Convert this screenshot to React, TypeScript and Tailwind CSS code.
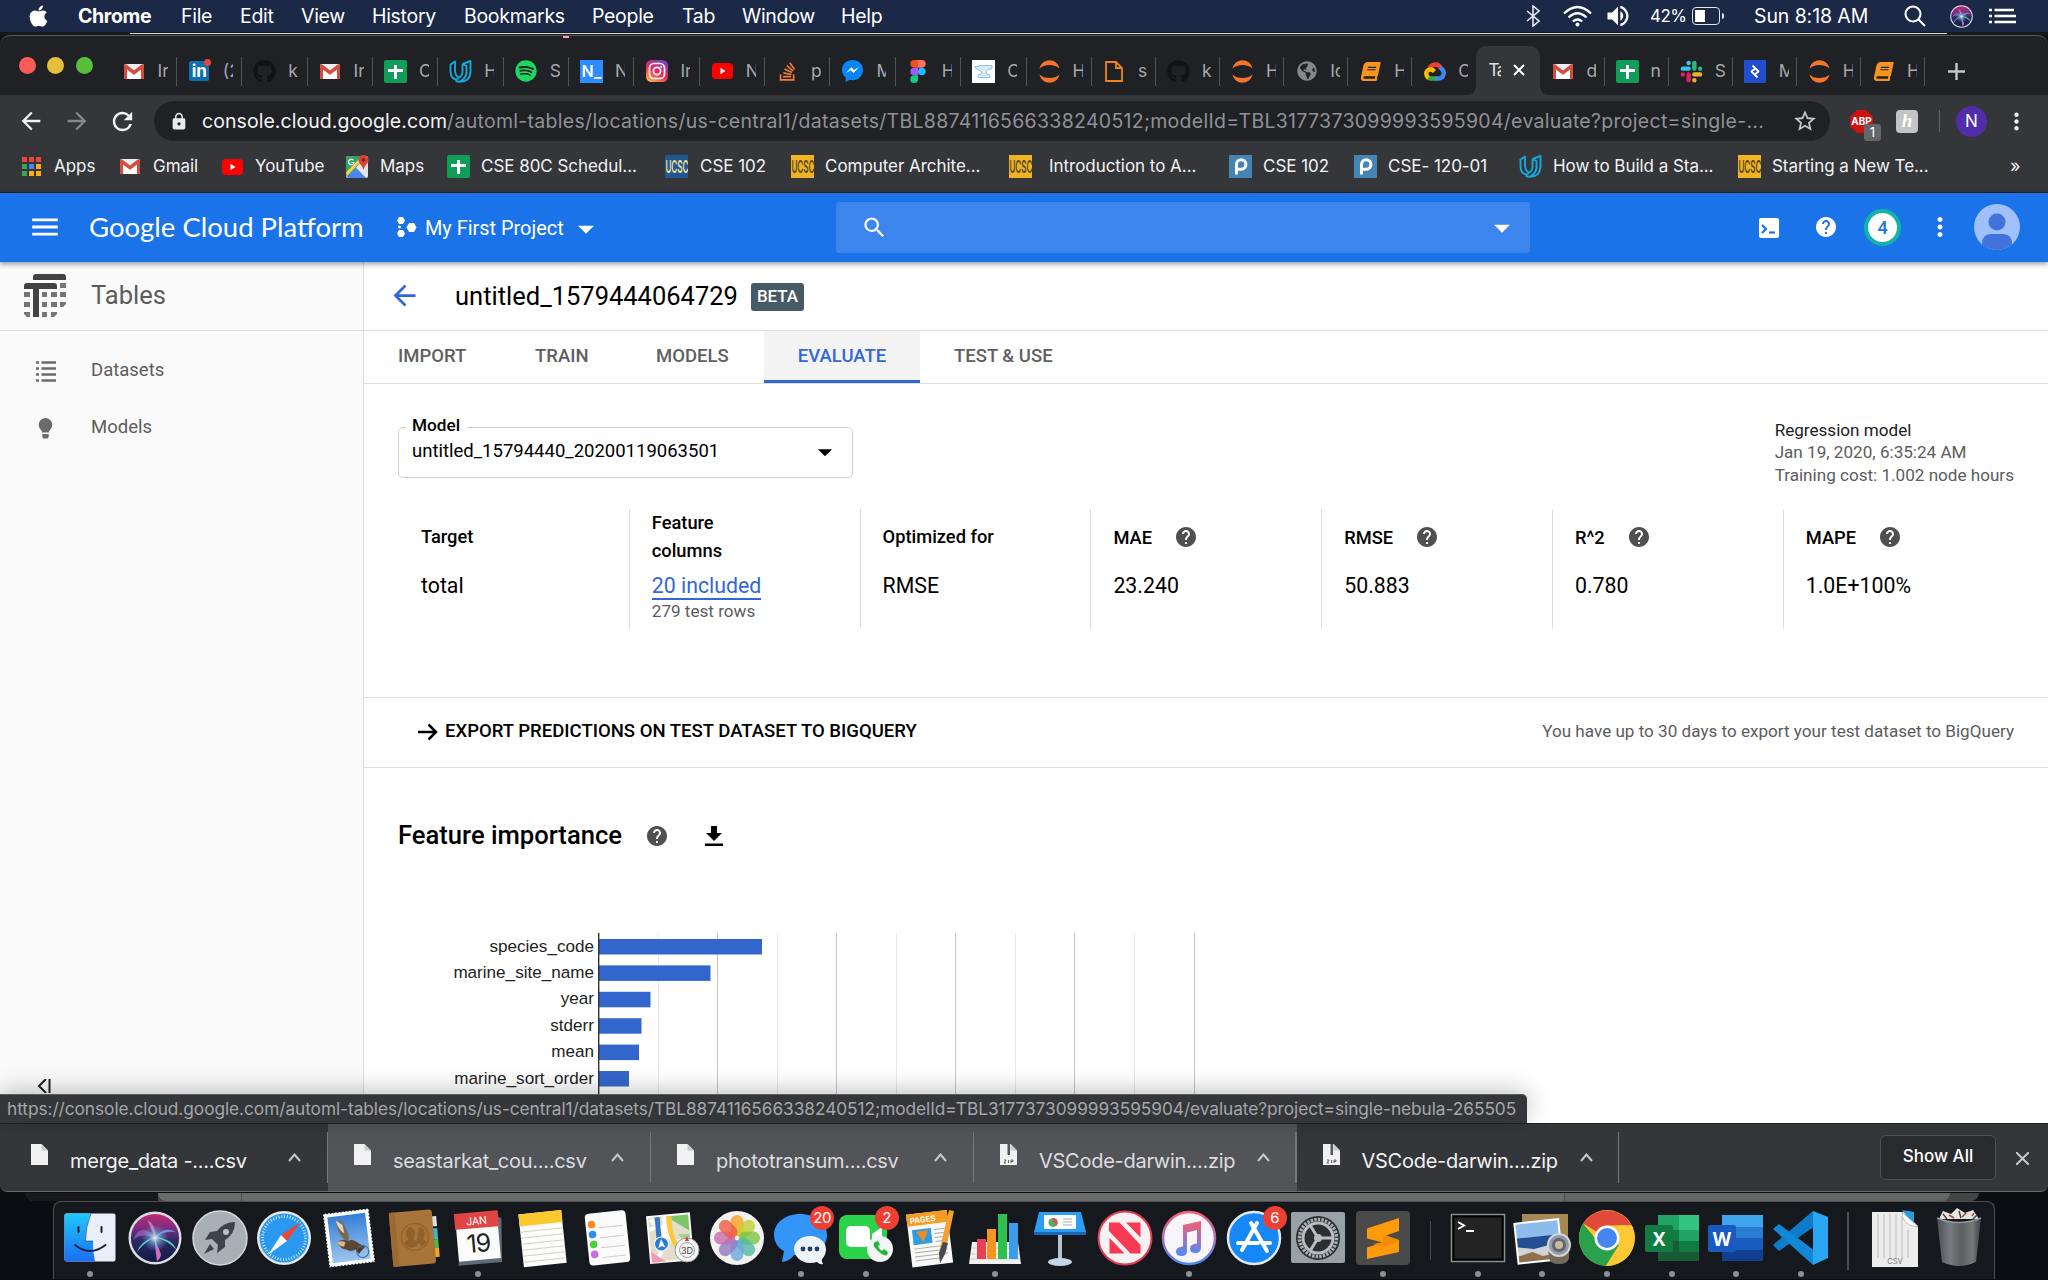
import React from 'react';
import {
  FaApple, FaGithub, FaSpotify, FaStackOverflow, FaGlobeAmericas, FaBook,
} from 'react-icons/fa';
import {
  MdArrowBack, MdArrowForward, MdRefresh, MdLock, MdStarBorder, MdHelp, MdMenu, MdMoreVert, MdArrowDropDown,
  MdSearch, MdVolumeUp,
} from 'react-icons/md';

type Kids = { children?: React.ReactNode };

/* ---------- small brand icons ---------- */

const Gmail = () => (
  <svg className="h-[15px] w-[20px]" viewBox="0 0 20 15">
    <rect width="20" height="15" rx="1.500" fill="#eceff1" />
    <path d="M3 15V6l7 5.500L17 6v9z" fill="#fff" />
    <path d="M0 1.500V13.500Q0 15 1.500 15H3V5.500L10 10.800L17 5.500V15H18.500Q20 15 20 13.500V1.500Q19.500 0 18 0.200L10 6.500L2 0.200Q.5 0 0 1.500z" fill="#d54b3d" />
  </svg>
);
const Sheets = () => (
  <svg className="h-[23px] w-[23px]" viewBox="0 0 23 23">
    <rect width="23" height="23" rx="2" fill="#0f9d58" />
    <path d="M10 5h3v4h6v3h-6v7h-3v-7H4V9h6z" fill="#fff" />
  </svg>
);
const LinkedIn = () => (
  <span className="relative flex h-[20px] w-[20px] items-center justify-center rounded-[2px] bg-[#0a70b0] text-[17px] leading-none font-bold text-white">
    in
    <span className="absolute -top-[2px] -right-[2px] h-[7px] w-[7px] rounded-full bg-[#e8453c]" />
  </span>
);
const Udacity = () => (
  <svg className="h-[23px] w-[23px]" viewBox="0 0 23 23" fill="none" stroke="#15a9db" strokeWidth="1.900" strokeLinejoin="round">
    <path d="M1.500 4.500L6 1.500V11Q6.500 16 10 17.500Q7 21.500 3 17Q1.500 15 1.500 11z" />
    <path d="M13.500 4L21.500 1V12Q21 21.500 11 21.800Q8 21.800 6.500 20.500M13.500 4V12Q13 16.500 10 17.500M13.500 4L17.500 6V13Q16.500 19 11 21.500" />
  </svg>
);
const Insta = () => (
  <svg className="h-[22px] w-[22px]" viewBox="0 0 22 22">
    <defs>
      <linearGradient id="ig" x1="0.200" y1="1" x2="0.800" y2="0">
        <stop offset="0" stopColor="#fdb34b" />
        <stop offset=".45" stopColor="#ee2a58" />
        <stop offset="1" stopColor="#7a3dd0" />
      </linearGradient>
    </defs>
    <rect width="22" height="22" rx="5.500" fill="url(#ig)" />
    <rect x="3.500" y="3.500" width="15" height="15" rx="4.500" fill="none" stroke="#fff" strokeWidth="1.700" />
    <circle cx="11" cy="11" r="3.600" fill="none" stroke="#fff" strokeWidth="1.700" />
    <circle cx="15.300" cy="6.700" r="1" fill="#fff" />
  </svg>
);
const YouTube = () => (
  <svg className="h-[16px] w-[21px]" viewBox="0 0 21 16">
    <rect width="21" height="16" rx="3.500" fill="#f00" />
    <path d="M8.500 4.800l5 3.200-5 3.200z" fill="#fff" />
  </svg>
);
const Messenger = () => (
  <svg className="h-[22px] w-[21px]" viewBox="0 0 21 22">
    <path d="M10.500 0C4.500 0 0 4.300 0 10c0 3.200 1.500 5.700 3.700 7.400V22l3.800-2.200c1 .2 2 .4 3 .4 6 0 10.500-4.400 10.500-10.200S16.500 0 10.500 0z" fill="#0a86fa" />
    <path d="M4 13l5.300-5.700 2.700 2.800 4.800-2.800-5.200 5.700-2.800-2.800z" fill="#fff" />
  </svg>
);
const Figma = () => (
  <svg className="h-[23px] w-[16px]" viewBox="0 0 16 24">
    <path d="M4 0h4v8H4a4 4 0 010-8z" fill="#f24e1e" />
    <path d="M8 0h4a4 4 0 010 8H8z" fill="#ff7262" />
    <path d="M4 8h4v8H4a4 4 0 010-8z" fill="#a259ff" />
    <circle cx="12" cy="12" r="4" fill="#1abcfe" />
    <path d="M4 16h4v4a4 4 0 11-4-4z" fill="#0acf83" />
  </svg>
);
const Anvil = () => (
  <svg className="h-[23px] w-[23px]" viewBox="0 0 23 23">
    <rect width="23" height="23" fill="#fff" />
    <path d="M7 5.500h13v3q-5 .5-6 3.500 0 2.500 4 3v2.500H6V15q4-.5 4-3Q8.500 11.500 7 10 4 9.500 2.500 6.500H7z" fill="#d8ebfb" stroke="#8fbfe8" />
  </svg>
);
const Jupyter = () => (
  <svg className="h-[23px] w-[21px]" viewBox="0 0 21 23" fill="#f3752b">
    <path d="M0.500 8.500C3-2.500 18-2.500 20.500 8.500 16 3.800 5 3.800.5 8.500zM.5 14.500c4.500 4.700 15.500 4.700 20 0-2.500 11-17.500 11-20 0z" />
  </svg>
);
const DocIcon = () => (
  <svg className="h-[21px] w-[18px]" viewBox="0 0 18 21" fill="none" stroke="#f0831c" strokeWidth="1.800">
    <path d="M1 1h10l6 6v13H1zM11 1v6h6" />
  </svg>
);
const GCloud = () => (
  <svg className="h-[19px] w-[22px]" viewBox="0 0 22 19" fill="none" strokeWidth="4.400">
    <path d="M5.500 6Q8 2.200 12 2.500q3.500.5 5 4" stroke="#ea4335" />
    <path d="M16 5.500q4 2.500 3.700 6Q19 16.200 15 16.500H11" stroke="#4285f4" />
    <path d="M12 16.500H6.500q-1.500 0-2.500-1" stroke="#34a853" />
    <path d="M4.500 16q-3-2.500-2-6Q4 7 7 7.500q2 .5 3.500 2" stroke="#fbbc05" />
  </svg>
);
const Slack = () => (
  <svg className="h-[23px] w-[23px]" viewBox="0 0 24 24" strokeWidth="4.600" strokeLinecap="round">
    <path d="M9 3v.1M3 9h6" stroke="#36c5f0" /><path d="M15 3v6M21 9v.1" stroke="#2eb67d" />
    <path d="M15 15h6M15 21v.1" stroke="#ecb22e" /><path d="M9 15v6M3 15v.1" stroke="#e01e5a" />
  </svg>
);
const Toptal = () => (
  <svg className="h-[23px] w-[22px]" viewBox="0 0 22 23">
    <rect width="22" height="23" fill="#204ecf" />
    <path d="M8.500 5.500L15 12M7 11L13.500 17.500M14.500 11.500L10.500 14.800M7.500 11.300L11.500 8.500" fill="none" stroke="#fff" strokeWidth="1.800" />
  </svg>
);
const MapsIcon = () => (
  <svg className="h-[24px] w-[24px]" viewBox="0 0 24 24">
    <rect x="1" y="1" width="22" height="22" rx="2" fill="#e8eaed" />
    <path d="M1 3q0-2 2-2h18L3 22q-2-.5-2-2z" fill="#34a366" />
    <path d="M2 22L11 12.500l10 10.500H4z" fill="#4a86ee" />
    <path d="M1 17.500L17 1h4L2 21z" fill="#fdd24a" />
    <path d="M13 11l10 10V9z" fill="#dfe3e8" />
    <path d="M18.500 0a5 5 0 00-5 5c0 4 4 5 5 10 1-5 5-6 5-10a5 5 0 00-5-5z" fill="#dc4437" />
    <circle cx="18.500" cy="5" r="1.800" fill="#7b231c" />
    <path d="M8.300 5.200A2.700 2.700 0 109 7.500H6.500" fill="none" stroke="#fff" strokeWidth="1.200" />
  </svg>
);
const Ucsc = ({ blue }: { blue?: boolean }) => (
  <span className={`flex h-[23px] w-[23px] items-center justify-center overflow-hidden ${blue ? 'bg-[#1f5891] text-[#f3dd92]' : 'bg-[#efb323] text-[#5b4a1c]'}`}>
    <span className="scale-x-[0.580] scale-y-[1.250] text-[14px] leading-none font-semibold">UCSC</span>
  </span>
);
const PIcon = () => (
  <svg className="h-[23px] w-[23px]" viewBox="0 0 23 23">
    <rect width="23" height="23" fill="#4585b5" />
    <path d="M7.500 19.500V9.500a4.700 4.700 0 114.700 4.700H7.500" fill="none" stroke="#fff" strokeWidth="3" />
  </svg>
);
const AppsIcon = () => (
  <span className="grid w-[19px] grid-cols-3 gap-[2px]">
    {['bg-[#e8453c]', 'bg-[#e8453c]', 'bg-[#e8453c]', 'bg-[#34a853]', 'bg-[#4285f4]', 'bg-[#fbae17]', 'bg-[#34a853]', 'bg-[#fbae17]', 'bg-[#fbae17]'].map((c, i) => (
      <span key={i} className={`h-[5px] w-[5px] ${c}`} />
    ))}
  </span>
);
const Book = () => <FaBook className="h-[19px] w-[19px] -skew-x-12 text-[#f7941e]" />;
const Git = () => <FaGithub className="h-[23px] w-[23px] text-[#111214]" />;

/* ---------- menu bar ---------- */

const menus: [string, string][] = [
  ['File', 'w-[59px]'], ['Edit', 'w-[61px]'], ['View', 'w-[71px]'], ['History', 'w-[92px]'], ['Bookmarks', 'w-[128px]'],
  ['People', 'w-[90px]'], ['Tab', 'w-[60px]'], ['Window', 'w-[99px]'], ['Help', 'w-[50px]'],
];

const SiriGlyph = ({ className }: { className: string }) => (
  <svg className={className} viewBox="0 0 56 56">
    <defs>
      <linearGradient id="siriBack" x1="0" y1="0" x2="0" y2="1">
        <stop offset="0" stopColor="#c12a72" /><stop offset=".3" stopColor="#7a2c80" /><stop offset=".55" stopColor="#2d2a63" /><stop offset="1" stopColor="#101a44" />
      </linearGradient>
      <radialGradient id="siriGlow" cx=".5" cy=".5" r=".5">
        <stop offset="0" stopColor="#fff" stopOpacity=".95" /><stop offset=".4" stopColor="#8fdcf5" stopOpacity=".5" /><stop offset="1" stopColor="#5fb3ff" stopOpacity="0" />
      </radialGradient>
    </defs>
    <circle cx="28" cy="28" r="27.500" fill="#dcdde4" />
    <circle cx="28" cy="28" r="25" fill="url(#siriBack)" />
    <path d="M5 30Q14 10 28 28 15 22 5 30z" fill="#b57fe0" opacity=".5" />
    <path d="M50 22Q38 14 28 28q10-8 22-6z" fill="#7ac9ff" opacity=".6" />
    <path d="M28 27Q12 32 9 43q7-10 19-16z" fill="#5de8e0" opacity=".9" />
    <path d="M28 27q18 2 22 13-8-9-22-13z" fill="#5de8c8" opacity=".9" />
    <path d="M27 27l3 25q5-4 4-8z" fill="#f07ad0" opacity=".85" />
    <path d="M28 28L20 9q10 6 8 19z" fill="#f3a7dc" opacity=".6" />
    <circle cx="28" cy="28" r="14" fill="url(#siriGlow)" />
  </svg>
);

const MenuBar = () => (
  <div className="flex h-[32px] items-center bg-[#1b2846] pt-[1px] pr-[32px] pl-[29px] text-[19.500px] tracking-[-0.300px] text-white">
    <FaApple className="mr-[30px] h-[24px] w-[19px] shrink-0" />
    <span className="w-[103px] font-bold tracking-[-0.350px]">Chrome</span>
    {menus.map(([t, w]) => <span key={t} className={`${w} whitespace-nowrap`}>{t}</span>)}
    <div className="ml-auto flex items-center">
      <svg className="mr-[23px] h-[22px] w-[14px]" viewBox="0 0 14 22" fill="none" stroke="#e8ebf2" strokeWidth="1.600"><path d="M1 6l12 10-6 5V1l6 5L1 16" /></svg>
      <svg className="mr-[12px] h-[22px] w-[29px]" viewBox="0 0 29 22" fill="none" stroke="#fff" strokeWidth="2.200"><path d="M1 8.500Q14.500-4.500 28 8.500M5.500 12.500q9-8.500 18 0M9.800 16.500q4.700-4 9.400 0" /><circle cx="14.500" cy="19.500" r="2" fill="#fff" stroke="none" /></svg>
      <MdVolumeUp className="mr-[18px] h-[28px] w-[28px]" />
      <span className="w-[42px] text-[17px] tracking-[-0.600px]">42%</span>
      <span className="mr-[2px] flex h-[18px] w-[28px] rounded-[4px] border-[1.500px] border-[#e0e3ea] p-[2px]"><span className="w-[10px] bg-white" /></span>
      <span className="mr-[30px] h-[6px] w-[2px] rounded-r bg-[#e0e3ea]" />
      <span className="w-[150px] tracking-[-0.100px] whitespace-nowrap">Sun 8:18 AM</span>
      <svg className="mr-[24px] h-[22px] w-[22px]" viewBox="0 0 22 22" fill="none" stroke="#fff" strokeWidth="2"><circle cx="9" cy="9" r="7.500" /><path d="M14.500 14.500L21 21" /></svg>
      <SiriGlyph className="mr-[16px] h-[23px] w-[23px]" />
      <svg className="h-[16px] w-[27px]" viewBox="0 0 27 16" stroke="#fff" strokeWidth="2.600"><path d="M0 2h3M5.500 2H25M0 8h3M5.500 8H27M0 14h3M5.500 14H27" /></svg>
    </div>
  </div>
);

/* ---------- browser tabs ---------- */

const Globe = () => <FaGlobeAmericas className="h-[20px] w-[20px] text-[#85878b]" />;
const tabsA: [React.FC, string][] = [
  [Gmail, 'In'], [LinkedIn, '(2'], [Git, 'k'], [Gmail, 'In'], [Sheets, 'C'], [Udacity, 'H'],
  [() => <FaSpotify className="h-[22px] w-[22px] text-[#1ed760]" />, 'S'],
  [() => <span className="flex h-[23px] w-[23px] items-center justify-center bg-[#2d8cff] text-[16px] font-semibold text-white">N_</span>, 'N'],
  [Insta, 'In'], [YouTube, 'N'],
  [() => <FaStackOverflow className="h-[21px] w-[19px] text-[#ef8236]" />, 'p'],
  [Messenger, 'M'], [Figma, 'H'], [Anvil, 'C'], [Jupyter, 'H'],
];
const tabsB: [React.FC, string][] = [[DocIcon, 's'], [Git, 'k'], [Jupyter, 'H'], [Globe, 'Ic'], [Book, 'H'], [GCloud, 'C']];
const tabsC: [React.FC, string][] = [[Gmail, 'd'], [Sheets, 'n'], [Slack, 'S'], [Toptal, 'M'], [Jupyter, 'H'], [Book, 'H']];

const Tab = ({ icon: Icon, text, width, line = true }: { icon: React.FC; text: string; width: string; line?: boolean }) => (
  <div className={`flex h-[29px] shrink-0 items-center ${width} ${line ? 'border-r-[1.500px] border-[#505256]' : ''}`}>
    <span className="ml-[10px] flex w-[25px] justify-center"><Icon /></span>
    <span className="ml-[11px] w-[10px] overflow-hidden text-[17.500px] whitespace-nowrap text-[#a6a9ae]">{text}</span>
  </div>
);

const TabStrip = () => (
  <div className="flex h-[60px] items-start rounded-t-[10px] border-t border-[#57595d] bg-[#202124] pl-[18.500px]">
    <div className="mt-[21px] mr-[19px] flex w-[74px] gap-[11.500px]">
      <span className="h-[17px] w-[17px] rounded-full bg-[#fc5b57]" />
      <span className="h-[17px] w-[17px] rounded-full bg-[#e5bf3c]" />
      <span className="h-[17px] w-[17px] rounded-full bg-[#57c038]" />
    </div>
    <div className="mt-[21px] flex items-center">
      {tabsA.map(([I, t], i) => <Tab key={i} icon={I} text={t} width="w-[65.370px]" />)}
      {tabsB.map(([I, t], i) => <Tab key={i} icon={I} text={t} width="w-[64.100px]" line={i < 5} />)}
    </div>
    <div className="relative mt-[10px] flex h-[49px] w-[64px] items-center rounded-t-[11px] bg-[#35363a] pl-[12px]">
      <svg className="absolute bottom-0 -left-[10px] h-[10px] w-[84px]" viewBox="0 0 84 10" fill="#35363a"><path d="M0 10Q10 10 10 0v10zM74 0q0 10 10 10H74z" /></svg>
      <span className="w-[13px] overflow-hidden text-[17px] tracking-[-1.500px] text-[#e0e1e3]">Ta</span>
      <svg className="ml-[12px] h-[12px] w-[12px]" viewBox="0 0 12 12" stroke="#fff" strokeWidth="2"><path d="M1 1l10 10M11 1L1 11" /></svg>
    </div>
    <div className="mt-[21px] flex items-center">
      {tabsC.map(([I, t], i) => <Tab key={i} icon={I} text={t} width="w-[64.100px]" />)}
      <svg className="ml-[23px] h-[17px] w-[17px]" viewBox="0 0 17 17" stroke="#c6c8cc" strokeWidth="2.400"><path d="M8.500 0v17M0 8.500h17" /></svg>
    </div>
  </div>
);

const Toolbar = () => (
  <div className="flex h-[51px] items-center bg-[#35363a] pt-[2px] pl-[17px]">
    <MdArrowBack className="h-[28px] w-[28px] text-[#f1f3f4]" />
    <MdArrowForward className="ml-[18px] h-[28px] w-[28px] text-[#85878b]" />
    <MdRefresh className="ml-[17px] h-[29px] w-[29px] text-[#f1f3f4]" />
    <div className="ml-[17px] flex h-[40px] w-[1676px] items-center rounded-full bg-[#202124] pr-[12px] pl-[15px]">
      <MdLock className="h-[19px] w-[20px] text-[#e8eaed]" />
      <span className="ml-[13px] text-[19.500px] tracking-[0.295px] whitespace-nowrap text-[#8f9297]">
        <span className="tracking-[0.060px] text-[#f1f3f4]">console.cloud.google.com</span>/automl-tables/locations/us-central1/datasets/TBL8874116566338240512;modelId=TBL3177373099993595904/evaluate?project=single-...
      </span>
      <MdStarBorder className="ml-auto h-[26px] w-[26px] text-[#c6c8cc]" />
    </div>
    <div className="relative ml-[20px] h-[23px] w-[23px]">
      <svg className="h-[23px] w-[23px]" viewBox="0 0 23 23"><path d="M7 0h9l7 7v9l-7 7H7l-7-7V7z" fill="#d2110f" /></svg>
      <span className="absolute inset-0 flex items-center justify-center text-[10px] font-bold text-white">ABP</span>
      <span className="absolute top-[14px] left-[14px] flex h-[17px] w-[17px] items-center justify-center rounded-[3px] bg-[#646669] text-[13px] text-white">1</span>
    </div>
    <span className="ml-[23px] flex h-[23px] w-[22px] items-center justify-center rounded-[4px] bg-[#c3c4c6] font-['Liberation_Serif'] text-[19px] font-bold text-white italic">h</span>
    <span className="ml-[21px] h-[22px] w-px bg-[#5f6368]" />
    <span className="ml-[16px] flex h-[31px] w-[31px] items-center justify-center rounded-full bg-[#512da8] text-[17px] text-white">N</span>
    <MdMoreVert className="ml-[16px] h-[27px] w-[27px] text-[#f1f3f4]" />
  </div>
);

const bookmarks: [React.ReactNode, string, string, string][] = [
  [<AppsIcon />, 'Apps', 'w-[32px]', 'w-[66px]'],
  [<Gmail />, 'Gmail', 'w-[33px]', 'w-[69px]'],
  [<YouTube />, 'YouTube', 'w-[33px]', 'w-[90px]'],
  [<MapsIcon />, 'Maps', 'w-[35px]', 'w-[67px]'],
  [<Sheets />, 'CSE 80C Schedul...', 'w-[34px]', 'w-[184px]'],
  [<Ucsc blue />, 'CSE 102', 'w-[35px]', 'w-[91px]'],
  [<Ucsc />, 'Computer Archite...', 'w-[34px]', 'w-[184px]'],
  [<Ucsc />, 'Introduction to A...', 'w-[40px]', 'w-[180px]'],
  [<PIcon />, 'CSE 102', 'w-[34px]', 'w-[91px]'],
  [<PIcon />, 'CSE- 120-01', 'w-[34px]', 'w-[131px]'],
  [<Udacity />, 'How to Build a Sta...', 'w-[34px]', 'w-[185px]'],
  [<Ucsc />, 'Starting a New Te...', 'w-[34px]', 'w-[238px]'],
];
const Bookmarks = () => (
  <div className="flex h-[47px] items-center border-b border-[#202124] bg-[#35363a] pb-[4px] pl-[22px] text-[17px] tracking-[-0.040px] text-[#f1f3f4]">
    {bookmarks.map(([icon, t, a, b], i) => (
      <div key={i} className="flex shrink-0 items-center">
        <span className={a}>{icon}</span>
        <span className={`${b} whitespace-nowrap`}>{t}</span>
      </div>
    ))}
    <span className="pb-[2px] text-[18px] leading-none">»</span>
  </div>
);

/* ---------- cloud console ---------- */

const GcpHeader = () => (
  <div className="relative z-10 flex h-[69px] shrink-0 items-center bg-[#1a73e8] pl-[28px] font-['Roboto'] text-white shadow-[0_2px_5px_rgba(0,0,0,0.400)]">
    <MdMenu className="h-[34px] w-[34px]" />
    <span className="ml-[27px] w-[306px] font-['Lato'] text-[27.500px] whitespace-nowrap">Google Cloud Platform</span>
    <svg className="mr-[8px] h-[21px] w-[22px]" viewBox="0 0 22 21" fill="#fff"><path d="M4 0h4l2 3.500L8 7H4L2 3.500zM4 13h4l2 3.500L8 20H4L2 16.500zM14 6h5l2.500 4.500L19 15h-5l-2.500-4.500z" /><circle cx="4.500" cy="10" r="1.500" /></svg>
    <span className="w-[142px] pt-[3px] text-[19.900px] whitespace-nowrap">My First Project</span>
    <MdArrowDropDown className="mt-[3px] h-[38px] w-[38px]" />
    <div className="mr-[229px] ml-auto flex h-[51px] w-[694px] items-center justify-between rounded-[3px] bg-[#3b85ec] pr-[9px] pl-[25px]">
      <MdSearch className="h-[27px] w-[27px]" />
      <MdArrowDropDown className="mt-[2px] h-[38px] w-[38px]" />
    </div>
    <svg className="mt-[2px] h-[20px] w-[20px]" viewBox="0 0 20 20"><rect width="20" height="20" rx="2" fill="#fff" /><path d="M3 7l4 4-4 4" fill="none" stroke="#1a73e8" strokeWidth="2.200" /><path d="M10 14.500h6" stroke="#1a73e8" strokeWidth="2.200" /></svg>
    <MdHelp className="ml-[35px] h-[24px] w-[24px]" />
    <span className="ml-[26px] flex h-[37px] w-[37px] items-center justify-center rounded-full border-[4px] border-[#12b5a5] bg-white text-[18px] font-medium text-[#1a73e8]">4</span>
    <MdMoreVert className="ml-[24px] h-[30px] w-[30px]" />
    <svg className="mr-[28px] ml-[19px] h-[46px] w-[46px]" viewBox="0 0 46 46">
      <clipPath id="av"><circle cx="23" cy="23" r="23" /></clipPath>
      <circle cx="23" cy="23" r="23" fill="#9fc0f8" />
      <g clipPath="url(#av)" fill="#4272dc"><circle cx="23" cy="18" r="8.500" /><path d="M8 46V40q0-10 9-10h12q9 0 9 10v6z" /></g>
    </svg>
  </div>
);

const TablesIcon = () => (
  <svg className="h-[43px] w-[42px]" viewBox="0 0 42 43" fill="#434343">
    <path d="M9 6V3Q9 0 12 0h27q3 0 3 3v3zM0 15v-3q0-3 3-3h27q3 0 3 3v3zM9 15h6v28H9z" />
    <path d="M36 9h6v5h-6zM0 18h6v5H0zM18 18h5v5h-5zM27 18h6v5h-6zM36 18h6v5h-6zM0 28h6v5H0zM18 28h5v5h-5zM27 28h6v5h-6zM36 28h6v2l-3 3h-3zM0 38h6v5H3l-3-3zM18 38h5v5h-5zM27 38h6v2l-3 3h-3z" fill="#757575" />
  </svg>
);

const Sidebar = () => (
  <div className="flex w-[364px] shrink-0 flex-col border-r border-[#dcdcdc] bg-[#fafafa] text-[#5c5c5c]">
    <div className="flex h-[69px] items-center border-b border-[#dcdcdc] pl-[24px]">
      <TablesIcon />
      <span className="ml-[25px] text-[25.500px]">Tables</span>
    </div>
    <div className="mt-[12px] flex h-[57px] items-center pl-[36px]">
      <svg className="h-[21px] w-[20px]" viewBox="0 0 20 21" stroke="#6b6b6b" strokeWidth="2.600"><path d="M0 1.500h3M5.500 1.500H20M0 7.500h3M5.500 7.500H20M0 13.500h3M5.500 13.500H20M0 19.500h3M5.500 19.500H20" /></svg>
      <span className="ml-[35px] text-[18.500px]">Datasets</span>
    </div>
    <div className="flex h-[57px] items-center pl-[38px]">
      <svg className="h-[21px] w-[15px]" viewBox="0 0 15 21" fill="#6b6b6b"><path d="M7.500 0a6.800 6.800 0 00-6.800 6.800c0 3 2 5 3.300 6.700v1h7v-1c1.300-1.700 3.300-3.700 3.300-6.700A6.800 6.800 0 007.500 0zM4.300 16h6.400v3l-1 1.500H5.300l-1-1.500z" /></svg>
      <span className="ml-[38px] text-[18.500px]">Models</span>
    </div>
    <svg className="mt-auto mb-[30px] ml-[37px] h-[14px] w-[14px]" viewBox="0 0 14 14" fill="none" stroke="#222" strokeWidth="2"><path d="M9 0L2 7l7 7M12.500 0v14" /></svg>
  </div>
);

const Help = ({ className }: { className: string }) => <MdHelp className={`h-[24px] w-[24px] text-[#505050] ${className}`} />;

const Metric = ({ label, help, value, children }: { label: string; help?: boolean; value?: string } & Kids) => (
  <div className="h-[120px] w-[230.800px] shrink-0 border-l border-[#dedede] pl-[22px] first:border-transparent">
    <div className="flex h-[57px] items-center text-[18.300px] leading-[28.500px] font-medium">
      <span className={children ? 'w-[90px]' : `whitespace-nowrap ${help ? 'pt-[2px]' : ''}`}>{label}</span>
      {help && <Help className="ml-[22px]" />}
    </div>
    <div className="mt-[6px] h-[28px] text-[21.300px] leading-[28px]">{value}{children}</div>
  </div>
);

const bars: [string, number][] = [['species_code', 163], ['marine_site_name', 111.500], ['year', 51.500], ['stderr', 42.500], ['mean', 40], ['marine_sort_order', 30]];
const Chart = () => (
  <div className="flex h-[162px] shrink-0 overflow-hidden font-['Liberation_Sans'] text-[17.100px] text-[#222]">
    <div className="w-[234px] shrink-0 pr-[4px] text-right">
      {bars.map(([n]) => <div key={n} className="h-[26.400px] leading-[27.400px]">{n}</div>)}
    </div>
    <svg className="h-[162px] w-[600px]" viewBox="0 0 600 162">
      {[1, 2, 3, 4, 5, 6, 7, 8, 9, 10].map((k) => (
        <rect key={k} x={Math.round(k * 59.550)} y="0" width="1" height="162" fill={k % 2 ? '#e8e8e8' : '#c4c4c4'} />
      ))}
      {bars.map(([n, w], i) => <rect key={n} x="0" y={6 + i * 26.400} width={w + 1} height="15.500" fill="#3366cc" />)}
      <rect x="0" y="0" width="1.400" height="162" fill="#333" />
    </svg>
  </div>
);

const navTabs: [string, string][] = [['IMPORT', 'pl-[34px] w-[137px]'], ['TRAIN', 'pl-[34px] w-[121px]'], ['MODELS', 'pl-[34px] w-[142px]']];

const Main = () => (
  <div className="flex min-w-0 flex-1 flex-col bg-white text-black">
    <div className="flex h-[69px] shrink-0 items-center border-b border-[#dedede] pl-[24px]">
      <MdArrowBack className="h-[33px] w-[33px] text-[#3367d6]" />
      <span className="ml-[34px] w-[296px] pt-[1px] text-[25.500px] whitespace-nowrap">untitled_1579444064729</span>
      <span className="mt-[2px] flex h-[28px] w-[53px] items-center justify-center rounded-[3px] bg-[#455a64] text-[16.900px] font-medium text-white">BETA</span>
    </div>
    <div className="flex h-[53px] shrink-0 border-b border-[#dedede] text-[18.500px] font-medium text-[#5f5f5f]">
      {navTabs.map(([t, c]) => <span key={t} className={`flex items-center ${c}`}>{t}</span>)}
      <span className="flex w-[156px] items-center justify-center border-b-[3px] border-[#3367d6] bg-[#f3f3f3] pt-[3px] text-[#3367d6]">EVALUATE</span>
      <span className="flex items-center pl-[34px]">TEST &amp; USE</span>
    </div>
    <div className="flex h-[125px] shrink-0 items-start justify-between pr-[34px] pl-[34px]">
      <div className="relative mt-[43px] flex h-[51px] w-[455px] items-center rounded-[5px] border-[1.500px] border-[#cfcfcf] pr-[10px] pl-[13px]">
        <span className="absolute -top-[15px] left-[6px] bg-white px-[7px] text-[17.200px] font-medium">Model</span>
        <span className="text-[18.500px] whitespace-nowrap">untitled_15794440_20200119063501</span>
        <MdArrowDropDown className="ml-auto h-[34px] w-[34px]" />
      </div>
      <div className="mt-[35px] text-[17.100px] leading-[22.700px] text-[#5c5c5c]">
        <div className="text-[#212121]">Regression model</div>
        <div>Jan 19, 2020, 6:35:24 AM</div>
        <div>Training cost: 1.002 node hours</div>
      </div>
    </div>
    <div className="flex h-[188px] shrink-0 pl-[34px]">
      <Metric label="Target" value="total" />
      <Metric label="Feature columns">
        <div><span className="border-b-2 border-[#3367d6] text-[#3367d6]">20 included</span></div>
        <div className="text-[17.100px] leading-[23px] text-[#5c5c5c]">279 test rows</div>
      </Metric>
      <Metric label="Optimized for" value="RMSE" />
      <Metric label="MAE" help value="23.240" />
      <Metric label="RMSE" help value="50.883" />
      <Metric label="R^2" help value="0.780" />
      <Metric label="MAPE" help value="1.0E+100%" />
    </div>
    <div className="flex h-[71px] shrink-0 items-center justify-between border-y border-[#dedede] pr-[34px] pl-[54px]">
      <div className="flex items-center">
        <svg className="mr-[7px] h-[18px] w-[20px]" viewBox="0 0 20 18" fill="none" stroke="#000" strokeWidth="2.500"><path d="M0 9h18M10.500 1.500L18 9l-7.500 7.500" /></svg>
        <span className="text-[18.550px] font-medium">EXPORT PREDICTIONS ON TEST DATASET TO BIGQUERY</span>
      </div>
      <span className="text-[17.100px] text-[#5c5c5c]">You have up to 30 days to export your test dataset to BigQuery</span>
    </div>
    <div className="flex h-[165px] shrink-0 items-start pt-[50px] pl-[34px]">
      <span className="w-[247px] text-[25.600px] leading-[34px] font-medium whitespace-nowrap">Feature importance</span>
      <Help className="mt-[6px]" />
      <svg className="mt-[8px] ml-[36px] h-[20px] w-[18px]" viewBox="0 0 18 20"><path d="M6 0h6v7h5l-8 8-8-8h5zM0 17.500h18V20H0z" /></svg>
    </div>
    <Chart />
  </div>
);

/* ---------- downloads ---------- */

const FileIcon = ({ zip }: { zip?: boolean }) => (
  <svg className="mb-[6px] h-[21px] w-[17px]" viewBox="0 0 17 21">
    <path d="M0 0h10.500L17 6.500V21H0z" fill="#f1f1f1" /><path d="M10.500 0L17 6.500h-6.500z" fill="#c9c9c9" />
    {zip && <><path d="M7.500 0h2.500v11H7.500z" fill="#555" /><path d="M4 16h2l-2 3h2M8.500 16v3M11 19v-3h2v1.500h-2" fill="none" stroke="#555" strokeWidth=".9" /></>}
  </svg>
);
const downloads: [string, boolean, string][] = [
  ['merge_data -....csv', false, 'w-[328px] bg-[#35363a] text-[#f1f3f4]'],
  ['seastarkat_cou....csv', false, 'w-[323px] bg-[#535458] text-[#dcdde0]'],
  ['phototransum....csv', false, 'w-[323px] bg-[#535458] text-[#dcdde0]'],
  ['VSCode-darwin....zip', true, 'w-[322.500px] bg-[#535458] text-[#dcdde0]'],
  ['VSCode-darwin....zip', true, 'w-[322.500px] bg-[#35363a] text-[#f1f3f4]'],
];
const Downloads = () => (
  <div className="flex h-[70px] items-stretch overflow-hidden rounded-b-[8px] border-t border-b border-t-[#202124] border-b-[#6b6c70] bg-[#35363a]">
    {downloads.map(([t, zip, c], i) => (
      <div key={i} className={`flex shrink-0 items-center ${c} ${i ? 'pl-[26px]' : 'pl-[31px]'}`}>
        <FileIcon zip={zip} />
        <span className="ml-[22px] w-[218px] pt-[7px] text-[20px] tracking-[-0.270px] whitespace-nowrap">{t}</span>
        <svg className="h-[9px] w-[13px]" viewBox="0 0 13 9" fill="none" stroke="#c6c8cc" strokeWidth="2"><path d="M1 8l5.500-6.500L12 8" /></svg>
        <span className="ml-auto h-[51px] w-[1.500px] bg-[#77787b]" />
      </div>
    ))}
    <span className="mt-[11px] mr-[1px] ml-auto flex h-[45px] w-[116px] items-center justify-center rounded-[6px] border border-[#505155] bg-[#292a2d] text-[17px] font-medium text-white">Show All</span>
    <svg className="mt-[28px] mr-[19px] ml-[19px] h-[13px] w-[13px]" viewBox="0 0 13 13" stroke="#c6c8cc" strokeWidth="2"><path d="M0 0l13 13M13 0L0 13" /></svg>
  </div>
);

/* ---------- dock ---------- */

const I = ({ children }: Kids) => <svg className="h-[56px] w-[56px] overflow-visible" viewBox="0 0 56 56">{children}</svg>;

const dockA: [React.ReactNode, boolean, string?][] = [
  [<I>
    <defs><linearGradient id="fi" x1="0" y1="0" x2="0" y2="1"><stop offset="0" stopColor="#1fc9fb" /><stop offset="1" stopColor="#1b6ef5" /></linearGradient></defs>
    <rect x="2.500" y="3.500" width="51" height="48" rx="2" fill="#e9eef8" />
    <path d="M4.500 3.500H29Q23.500 17 23.500 31H31Q30.500 41 33 51.500H4.500q-2 0-2-2v-44q0-2 2-2z" fill="url(#fi)" />
    <path d="M16.500 17v5M39.500 17v5M13 35q15 12 30.500 0" stroke="#17233c" strokeWidth="2" fill="none" strokeLinecap="round" />
    <path d="M29 3.500Q23.500 17 23.500 31H31" fill="none" stroke="#17233c" strokeWidth="1" opacity=".5" />
  </I>, true],
  [<SiriGlyph className="h-[56px] w-[56px]" />, false],
  [<I>
    <circle cx="28" cy="28" r="27" fill="#a8b0b5" stroke="#d4d8da" strokeWidth="1.500" />
    <path d="M43 12Q32 12 25 21l-7 1-5 8 7-1 6 6-1 8 8-6 0-7Q43 24 43 12z" fill="#3c434a" /><path d="M18 34l-6 10 10-5z" fill="#3c434a" />
    <circle cx="34" cy="22" r="3" fill="#b8c0c4" />
  </I>, false],
  [<I>
    <circle cx="28" cy="28" r="27" fill="#e6e9ee" /><circle cx="28" cy="28" r="24.500" fill="#2a98ee" />
    <circle cx="28" cy="28" r="21.500" fill="none" stroke="#fff" strokeWidth="3" strokeDasharray=".9 1.900" opacity=".8" />
    <path d="M45 12L31 31l-6-6z" fill="#f04438" /><path d="M12 45l13-20 6 6z" fill="#f4f6f8" />
  </I>, false],
  [<I><g transform="rotate(-7 28 28)">
    <defs><linearGradient id="sky" x1="0" y1="0" x2="0" y2="1"><stop offset="0" stopColor="#2f7bd6" /><stop offset="1" stopColor="#a3c9ee" /></linearGradient></defs>
    <rect x="7" y="3" width="42" height="50" fill="url(#sky)" stroke="#fff" strokeWidth="4" />
    <rect x="5" y="1" width="46" height="54" fill="none" stroke="#15191f" strokeWidth="1.500" strokeDasharray="1.500 2" />
    <path d="M18 9q7 1 8 9 3 6 1 13-5-2-7-7-4-7-2-15z" fill="#7c6853" /><path d="M17 9q1 9 7 14l-1-9z" fill="#ddd6cc" />
    <path d="M16 31q5-4 11 0 4-2 8 2l8 6q-5 5-10 1-4 3-9-1-6-1-8-8z" fill="#5f4630" /><path d="M16 31q4-2 8 1l-2 4q-5-1-6-5z" fill="#d9b98c" /><path d="M32 38l9 2-5 5z" fill="#4b3726" />
    <circle cx="40" cy="43" r="6" fill="none" stroke="#3a6ba5" strokeWidth="1" />
  </g></I>, false],
  [<I><g transform="rotate(-5 28 28)">
    <rect x="40" y="8" width="12" height="10" fill="#e0e0e0" /><rect x="40" y="20" width="12" height="11" fill="#35b6c9" /><rect x="40" y="31" width="12" height="9" fill="#54b848" /><rect x="40" y="40" width="12" height="9" fill="#f5a623" />
    <rect x="5" y="1" width="43" height="54" rx="3" fill="#a87439" /><rect x="5" y="1" width="6" height="54" fill="#9b6a32" />
    <circle cx="29" cy="27" r="13.500" fill="none" stroke="#966430" strokeWidth="1.500" />
    <path d="M25 17a4.500 5.500 0 014.500 5.500q0 4-2 6 0 2 5 4-2 5-7 5-6-1-8-6 5-2 5-3-2-2-2-6A4.500 5.500 0 0125 17zM34 18q5 0 5 6 0 3-2 5 0 2 3 3-2 4-6 5-1-5-4-6 2-3 2-7z" fill="#8f5f2c" />
  </g></I>, false],
  [<I><g transform="rotate(-5 28 28)">
    <path d="M8 46l-2 8h44l3-44-5-2z" fill="#5d6a78" /><rect x="7" y="3" width="42" height="47" fill="#fbfbfb" /><rect x="6" y="2" width="44" height="16" rx="1" fill="#e04545" />
    <text x="28" y="14.500" fontSize="10.500" fill="#fff" textAnchor="middle" fontFamily="Inter">JAN</text>
    <text x="28" y="42" fontSize="25" letterSpacing="-1" fill="#222" textAnchor="middle" fontFamily="Inter" fontWeight="400">19</text>
  </g></I>, true],
  [<I><g transform="rotate(-6 28 28)">
    <rect x="6" y="2" width="43" height="53" fill="#fdfdf9" /><rect x="6" y="2" width="43" height="12" fill="#fbc82e" />
    <path d="M6 20h43M6 26h43M6 32h43M6 38h43M6 44h43M6 50h43" stroke="#d0d0cc" strokeWidth="1" />
  </g></I>, false],
  [<I><g transform="rotate(-6 28 28)">
    <rect x="8" y="2" width="41" height="52" rx="4" fill="#fbfbfb" />
    <circle cx="14" cy="13" r="3.800" fill="#fb8b24" /><circle cx="14" cy="23" r="3.800" fill="#2a8ff0" /><circle cx="14" cy="33" r="3.800" fill="#4cd137" /><circle cx="14" cy="43" r="3.800" fill="#c86fe0" />
    <path d="M21 17h24M21 27h24M21 37h24M21 47h24" stroke="#ccc" />
  </g></I>, false],
  [<I><g transform="rotate(-5 28 28)">
    <rect x="5" y="5" width="42" height="46" fill="#e4ddcb" stroke="#f7f7f7" strokeWidth="2" /><path d="M24 6h22v16z" fill="#7cc66a" /><path d="M34 25h12v12z" fill="#a5d68c" />
    <path d="M6 18q18-6 21 6t19 8M22 6q0 30-12 44M8 8l36 40" stroke="#fff" strokeWidth="4" fill="none" /><path d="M27 6q-3 25 14 44" stroke="#fbc93b" strokeWidth="5" fill="none" /><path d="M6 40l14 11H6z" fill="#f29bb1" /><path d="M15 6v30" stroke="#3478c8" strokeWidth="5" />
    <circle cx="17" cy="33" r="7" fill="#2a7fd4" stroke="#fff" /><path d="M17 28l3.500 9-3.500-2-3.500 2z" fill="#fff" />
  </g><circle cx="43" cy="40" r="12" fill="#f6f6f6" stroke="#999" /><circle cx="43" cy="40" r="7.500" fill="none" stroke="#888" strokeWidth=".8" /><path d="M43 26l-2 5h4z" fill="#e33" /><text x="43" y="43.500" fontSize="9" textAnchor="middle" fill="#444" fontFamily="Inter">3D</text></I>, false],
  [<I>
    <circle cx="28" cy="28" r="27" fill="#f3f2f0" />
    {['#f9a01b', '#c3d02f', '#7cc242', '#4fb9a5', '#6aa7dd', '#9279c2', '#c66bae', '#ee5a45'].map((c, i) => <rect key={c} x="21.500" y="5" width="13" height="21" rx="6.500" fill={c} opacity=".8" transform={`rotate(${i * 45} 28 28)`} />)}
  </I>, false],
  [<I>
    <path d="M27 4C12 4 1 13 1 25c0 7 4 13 10 16q-1 5-2 11 8-1 12-7C42 47 54 38 54 25 54 13 42 4 27 4z" fill="#3395f8" />
    <path d="M37 26c-9 0-16 6-16 13s7 14 16 14q4 0 7-1 3 3 6 2-2-3-1-5 4-4 4-10c0-7-7-13-16-13z" fill="#eef3fa" />
    <circle cx="30" cy="39" r="2.400" fill="#1e3f72" /><circle cx="37" cy="39" r="2.400" fill="#1e3f72" /><circle cx="44" cy="39" r="2.400" fill="#1e3f72" />
  </I>, true, '20'],
  [<I>
    <rect x="1" y="5" width="48" height="44" rx="8" fill="#2bd34b" /><rect x="8" y="16" width="24" height="21" rx="5" fill="#fff" /><path d="M34 24l10-7v19l-10-7z" fill="#fff" />
    <circle cx="42" cy="39" r="13" fill="#f3f5f6" /><path d="M37 32q-4 3 3 9t9 4l1-3-4-3-2 2q-3-2-4-5l2-1-2-4z" fill="#22b53e" />
  </I>, true, '2'],
  [<I><g transform="rotate(-7 28 28)">
    <rect x="6" y="2" width="41" height="53" fill="#f8f8f6" /><rect x="6" y="2" width="41" height="12" fill="#f69b23" /><text x="9" y="11.500" fontSize="8" fill="#fff" fontFamily="Inter" fontWeight="600">PAGES</text>
    <rect x="10" y="18" width="19" height="15" fill="#2f9de0" /><path d="M14 20h12l-6 11z" fill="#f08a24" /><path d="M32 20h11M32 24h11M32 28h11M32 32h11M10 37h33M10 41h33M10 45h33M10 49h24" stroke="#aaa" />
  </g><path d="M46 0l5 1-9 43-5 9-1-10z" fill="#f5a02c" /><path d="M40 32l5 1-3 11-5 9-1-10z" fill="#444b54" /></I>, false],
  [<I>
    <path d="M5 32h46l3 22H2z" fill="#f0f0f0" /><path d="M5 38h46M4 44h48M3 49h50" stroke="#ccc" />
    <path d="M10 29h9v20h-9z" fill="#ea3e54" /><path d="M20 19h9v30h-9z" fill="#f7941e" /><path d="M31 4h9v45h-9z" fill="#2fc04f" /><path d="M42 13h9v36h-9z" fill="#3c9cec" />
  </I>, true],
  [<I>
    <path d="M7 2h42l5 20H2z" fill="#2b9df4" /><path d="M2 22h52v3H2z" fill="#1568b8" /><path d="M12 5h32v14H12z" fill="#fff" /><circle cx="21" cy="12.500" r="4.500" fill="#43b86d" /><path d="M21 12.500V8a4.500 4.500 0 013 8z" fill="#e8504a" /><path d="M31 9h9M31 12h9M31 15h9" stroke="#aaa" />
    <path d="M26 25h4v26h-4z" fill="#b9c3cf" /><ellipse cx="28" cy="52" rx="12" ry="4" fill="#c4d5e6" />
  </I>, false],
  [<I>
    <circle cx="28" cy="28" r="26.500" fill="#f6f1f2" stroke="#e23b50" strokeWidth="2" /><path d="M12 12.500h10.500L43.500 35v8.500H33.500L12 21z" fill="#fa3a55" /><path d="M12.500 28l15 15.500h-15zM29 12.500h14.500V27.500z" fill="#fa3a55" />
  </I>, false],
  [<I>
    <defs><linearGradient id="mu" x1="0" y1="0" x2="0" y2="1"><stop offset="0" stopColor="#fb5b74" /><stop offset="1" stopColor="#4b8cf5" /></linearGradient></defs>
    <circle cx="28" cy="28" r="26" fill="#f7f5fa" stroke="url(#mu)" strokeWidth="2.500" /><path d="M22 15l18-4v26q0 6-5.500 6T29 38.500t7-5V20l-10 2.500V41q0 5-5.500 5T15 41.500t7-5z" fill="url(#mu)" />
  </I>, true],
  [<I>
    <circle cx="28" cy="28" r="26" fill="#1687f8" stroke="#e0e8f2" strokeWidth="2.500" /><path d="M31 13L16 40M25 13l16 28M12 33h20M36 33h8" stroke="#fff" strokeWidth="4" strokeLinecap="round" fill="none" />
  </I>, false, '6'],
  [<I>
    <rect x="1" y="2" width="54" height="51" rx="2" fill="#98a1a6" /><circle cx="28" cy="28" r="22" fill="#2b2f32" /><circle cx="28" cy="28" r="18.500" fill="none" stroke="#aab0b3" strokeWidth="3.500" strokeDasharray="2.400 1.200" />
    <circle cx="28" cy="28" r="15" fill="none" stroke="#b6bcc0" strokeWidth="3" /><circle cx="28" cy="28" r="4" fill="#b6bcc0" /><path d="M28 28L20 15M28 28h15M28 28l-8 13" stroke="#b6bcc0" strokeWidth="3" />
  </I>, false],
  [<I>
    <rect x="1" y="1" width="54" height="54" rx="4" fill="#4a4a4a" /><path d="M12 18.500L44 8v13l-13 4.500L44 30v12L12 49V37.500l16-5-16-4z" fill="#ff9a0a" /><path d="M28 26.500l3-1L44 30l-4 3-12 4-10-3 10-2z" fill="#f28c00" />
  </I>, true],
];
const dockB: [React.ReactNode, boolean, string?][] = [
  [<I><rect x="1.500" y="4.500" width="53" height="47" fill="#232323" stroke="#8a9296" strokeWidth="1.500" /><rect x="3.500" y="6.500" width="49" height="43" fill="none" stroke="#000" strokeWidth="2" /><path d="M8 12l6 3.500-6 3.500M16 21h8" stroke="#fff" strokeWidth="2" fill="none" /></I>, true],
  [<I>
    <rect x="8" y="4" width="46" height="40" fill="#a58a55" /><g transform="rotate(-6 28 28)"><rect x="1" y="10" width="46" height="42" fill="#fff" /><rect x="3" y="12" width="42" height="17" fill="#8dbcec" /><rect x="3" y="26" width="42" height="13" fill="#244f94" /><path d="M3 35l16 3 26-4v16H3z" fill="#cfd3d8" /><path d="M3 44l14-3 10 5 18-2v6H3z" fill="#8f6f4c" /></g>
    <path d="M34 36h21v12q-1 6-10 6t-10-6z" fill="#75695c" /><circle cx="45" cy="35" r="11" fill="#8f9aa6" stroke="#d4d4d4" strokeWidth="2" /><circle cx="45" cy="35" r="7" fill="#5d6670" /><circle cx="45" cy="35" r="4" fill="#cdb89a" />
  </I>, true],
  [<I>
    <circle cx="28" cy="28" r="28" fill="#fcc934" /><path d="M28 28L4 13.500A28 28 0 0152.500 15.500H28z" fill="#e04a3a" /><path d="M4 13.500A28 28 0 0027 56L40 35 28 28H16z" fill="#2aa24c" /><path d="M52.500 15.500A28 28 0 0127 56l13-21q4-9-4-19.500z" fill="#fcc934" />
    <circle cx="28" cy="28" r="12.500" fill="#fff" /><circle cx="28" cy="28" r="10" fill="#4586f3" />
  </I>, true],
  [<I>
    <path d="M14 5h21v15H14z" fill="#21a366" /><path d="M35 5h20v15H35z" fill="#33c481" /><path d="M14 20h21v11H14z" fill="#107c41" /><path d="M35 20h20v11H35z" fill="#21a366" /><path d="M14 31h21v20H14z" fill="#185c37" /><path d="M35 31h20v11H35z" fill="#107c41" /><path d="M35 42h20v9H35z" fill="#185c37" />
    <rect x="1" y="15" width="28" height="27" rx="2" fill="#107c41" /><text x="15" y="35.500" fontSize="19" textAnchor="middle" fill="#fff" fontFamily="Open Sans" fontWeight="700">X</text>
  </I>, true],
  [<I>
    <path d="M14 5h41v12H14z" fill="#41a5ee" /><path d="M14 17h41v11H14z" fill="#2b7cd3" /><path d="M14 28h41v12H14z" fill="#185abd" /><path d="M14 40h41v11H14z" fill="#103f91" />
    <rect x="0" y="15" width="28" height="27" rx="2" fill="#185abd" /><text x="14" y="35.500" fontSize="19" textAnchor="middle" fill="#fff" fontFamily="Open Sans" fontWeight="700">W</text>
  </I>, true],
  [<I>
    <path d="M40 1L0 35l6 6L42 16z" fill="#0f7ccb" /><path d="M0 19l6-5 36 27-2 14z" fill="#1287d6" /><path d="M40 1l15 6v41l-15 7z" fill="#2aa5f2" />
  </I>, true],
];
const dockC: [React.ReactNode, boolean, string?][] = [
  [<I><path d="M5 2h32l14 14v41H5z" fill="#ececec" /><path d="M11 4v44M17 4v44M23 4v44M29 4v44M35 6v42M41 20v28" stroke="#d4d4d4" strokeWidth="2" /><path d="M35 0l12 2v14z" fill="#2a9be0" /><path d="M35 2q0 14 16 15z" fill="#fff" stroke="#c2c2c2" /><text x="28" y="54" fontSize="7.500" textAnchor="middle" fill="#777" fontFamily="Inter">CSV</text></I>, false],
  [<I>
    <defs><linearGradient id="bin" x1="0" y1="0" x2="1" y2="0"><stop offset="0" stopColor="#4b4f52" /><stop offset=".3" stopColor="#777c80" /><stop offset=".55" stopColor="#5a5e61" /><stop offset=".8" stopColor="#73787b" /><stop offset="1" stopColor="#3f4346" /></linearGradient></defs>
    <path d="M8 9l4-8 8 3 6-6 8 5 8-3 6 9z" fill="#e4e4e0" /><path d="M18 5l5 3M35 3l-4 4M41 6l2-3" stroke="#b0483e" strokeWidth="1.500" /><path d="M12 4l4 5M28 1l2 7M46 5l-4 4" stroke="#444" strokeWidth="1.500" />
    <path d="M6 8q22 9 44 0l-5 44q-17 8-34 0z" fill="url(#bin)" /><path d="M6 8q22 9 44 0" stroke="#94999c" strokeWidth="1.500" fill="none" />
  </I>, false],
];
const DockItems = ({ items }: { items: [React.ReactNode, boolean, string?][] }) => (
  <>
    {items.map(([icon, dot, badge], i) => (
      <div key={i} className="relative flex w-[64.650px] shrink-0 flex-col items-center pt-[8px]">
        <div className="flex h-[56px] w-[54px] justify-center">{icon}</div>
        {dot && <span className="mt-[5px] h-[6px] w-[6px] rounded-full bg-[#8d9093]" />}
        {badge && <span className="absolute top-[4px] left-[41px] flex h-[24px] w-[24px] items-center justify-center rounded-full bg-[#ef3e33] text-[15px] tracking-[-0.500px] text-white">{badge}</span>}
      </div>
    ))}
  </>
);
const Desktop = () => (
  <div className="flex h-[88px] flex-col bg-[#0a0e13]">
    <div className="ml-[26px] flex h-[9px] w-[1953px] shrink-0 overflow-hidden rounded-b-[8px] border-t border-[#0c0d0e] bg-[#454545]">
      <div className="w-[132px] bg-[#17181a]" />
      <div className="w-[84px] rounded-bl-[8px] border-r border-[#4c4c4c] bg-[#6b6b6b]" />
      <div className="w-[1323px] border-r border-[#4c4c4c] bg-[#6b6b6b]" />
      <div className="w-[385px] rounded-br-[8px] bg-[#666]" />
    </div>
    <div className="ml-[53px] flex h-[78px] w-[1942px] rounded-t-[8px] border border-b-0 border-[#4b4d50] bg-[#15191e] pl-[4px]">
      <DockItems items={dockA} />
      <div className="flex w-[30px] justify-center pt-[19px]"><span className="h-[39px] w-[1.500px] bg-[#4a4d51]" /></div>
      <DockItems items={dockB} />
      <div className="flex w-[29px] justify-center pt-[10px]"><span className="h-[58px] w-[1.500px] bg-[#4a4d51]" /></div>
      <DockItems items={dockC} />
    </div>
  </div>
);

export default function App() {
  return (
    <div className="flex h-[1280px] w-[2048px] flex-col overflow-hidden bg-[#0e1117] font-['Inter',sans-serif]">
      <MenuBar />
      <div className="relative h-[3px] shrink-0 bg-[#16181c] pt-[1px] pl-[130px]">
        <div className="h-[1.500px] w-[1817px] bg-[#d5d7da]" />
        <span className="absolute top-[4px] left-[563px] z-10 h-[2px] w-[6px] bg-[#f0a7a7]" />
      </div>
      <TabStrip />
      <Toolbar />
      <Bookmarks />
      <div className="relative flex h-[930px] shrink-0 flex-col font-['Roboto']">
        <GcpHeader />
        <div className="flex min-h-0 flex-1">
          <Sidebar />
          <Main />
        </div>
        <div className="absolute top-[901px] left-0 flex h-[29px] w-[1527px] items-center rounded-tr-[5px] border-t border-[#5a5b5f] bg-[#35363a] pl-[7px] font-['Inter'] text-[17.300px] tracking-[-0.060px] whitespace-nowrap text-[#a3a6ab] shadow-[0_-3px_24px_rgba(0,0,0,0.250)]">
          https://console.cloud.google.com/automl-tables/locations/us-central1/datasets/TBL8874116566338240512;modelId=TBL3177373099993595904/evaluate?project=single-nebula-265505
        </div>
      </div>
      <Downloads />
      <Desktop />
    </div>
  );
}
